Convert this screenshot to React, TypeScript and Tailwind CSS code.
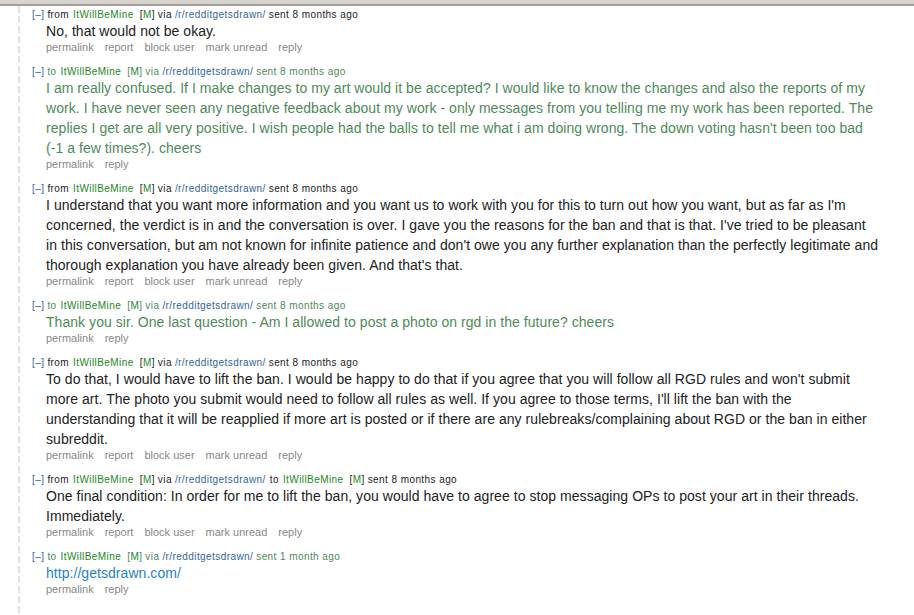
import React from 'react';

type Msg = {
    dir: 'from' | 'to';
    toUser?: boolean;
    sent: string;
    lines: string[];
    link?: boolean;
};

// lines are kept as the original thread wraps them
const messages: Msg[] = [
    { dir: 'from', sent: '8 months ago', lines: ['No, that would not be okay.'] },
    {
        dir: 'to',
        sent: '8 months ago',
        lines: [
            'I am really confused. If I make changes to my art would it be accepted? I would like to know the changes and also the reports of my',
            'work. I have never seen any negative feedback about my work - only messages from you telling me my work has been reported. The',
            "replies I get are all very positive. I wish people had the balls to tell me what i am doing wrong. The down voting hasn't been too bad",
            '(-1 a few times?). cheers',
        ],
    },
    {
        dir: 'from',
        sent: '8 months ago',
        lines: [
            "I understand that you want more information and you want us to work with you for this to turn out how you want, but as far as I'm",
            "concerned, the verdict is in and the conversation is over. I gave you the reasons for the ban and that is that. I've tried to be pleasant",
            "in this conversation, but am not known for infinite patience and don't owe you any further explanation than the perfectly legitimate and",
            "thorough explanation you have already been given. And that's that.",
        ],
    },
    { dir: 'to', sent: '8 months ago', lines: ['Thank you sir. One last question - Am I allowed to post a photo on rgd in the future? cheers'] },
    {
        dir: 'from',
        sent: '8 months ago',
        lines: [
            "To do that, I would have to lift the ban. I would be happy to do that if you agree that you will follow all RGD rules and won't submit",
            "more art. The photo you submit would need to follow all rules as well. If you agree to those terms, I'll lift the ban with the",
            'understanding that it will be reapplied if more art is posted or if there are any rulebreaks/complaining about RGD or the ban in either',
            'subreddit.',
        ],
    },
    {
        dir: 'from',
        toUser: true,
        sent: '8 months ago',
        lines: [
            'One final condition: In order for me to lift the ban, you would have to agree to stop messaging OPs to post your art in their threads.',
            'Immediately.',
        ],
    },
    { dir: 'to', sent: '1 month ago', lines: ['http://getsdrawn.com/'], link: true },
];

const fromButtons = ['permalink', 'report', 'block user', 'mark unread', 'reply'];
const toButtons = ['permalink', 'reply'];

const Author: React.FC<{ tone: string }> = ({ tone }) => (
    <>
        <span className="ml-[4px] text-[#228822]">ItWillBeMine</span>
        <span className={`ml-[6px] ${tone}`}>
            [<span className="text-[#228822]">M</span>]
        </span>
    </>
);

const Message: React.FC<{ m: Msg }> = ({ m }) => {
    const isTo = m.dir === 'to';
    const tone = isTo ? 'text-[#4e8a5a]' : 'text-[#222]';
    const buttons = isTo ? toButtons : fromButtons;
    return (
        <div className="flex flex-col">
            <div className={`h-[12px] leading-[12px] text-[10px] tracking-[0.42px] whitespace-nowrap ${tone}`}>
                <span className="text-[#369]">[–]</span>
                <span className="ml-[3px]">{m.dir}</span>
                <Author tone={tone} />
                <span className="ml-[3px]">via</span>
                <span className="ml-[3px] text-[#369]">/r/redditgetsdrawn/</span>
                {m.toUser && (
                    <>
                        <span className="ml-[4px]">to</span>
                        <Author tone={tone} />
                    </>
                )}
                <span className="ml-[3px]">sent {m.sent}</span>
            </div>
            <div className={`pl-[14px] text-[14px] leading-[20px] tracking-[0.05px] whitespace-nowrap ${tone}`}>
                {m.lines.map((l, i) => (
                    <div key={i} className={m.link ? 'text-[#2a7fcb]' : ''}>{l}</div>
                ))}
            </div>
            <div className="pl-[14px] flex gap-[11px] h-[12px] leading-[12px] text-[11px] text-[#888]">
                {buttons.map(b => (
                    <span key={b}>{b}</span>
                ))}
            </div>
        </div>
    );
};

export default function App() {
    return (
        <div className="w-[914px] h-[615px] overflow-hidden bg-white flex flex-col font-['Liberation_Sans',Arial,sans-serif]">
            <div className="h-[6px] shrink-0 bg-[#d7d3cf] border-b-2 border-[#a29e9a]" />
            <div className="flex flex-1">
                <div className="w-[18px] shrink-0" />
                <div className="w-[2px] shrink-0 bg-[repeating-linear-gradient(to_bottom,#e1e1e1_0px,#e1e1e1_7px,transparent_7px,transparent_10px)]" />
                <div className="flex flex-col gap-[13px] pt-[3px] pl-[12px]">
                    {messages.map((m, i) => (
                        <Message key={i} m={m} />
                    ))}
                </div>
            </div>
        </div>
    );
}
